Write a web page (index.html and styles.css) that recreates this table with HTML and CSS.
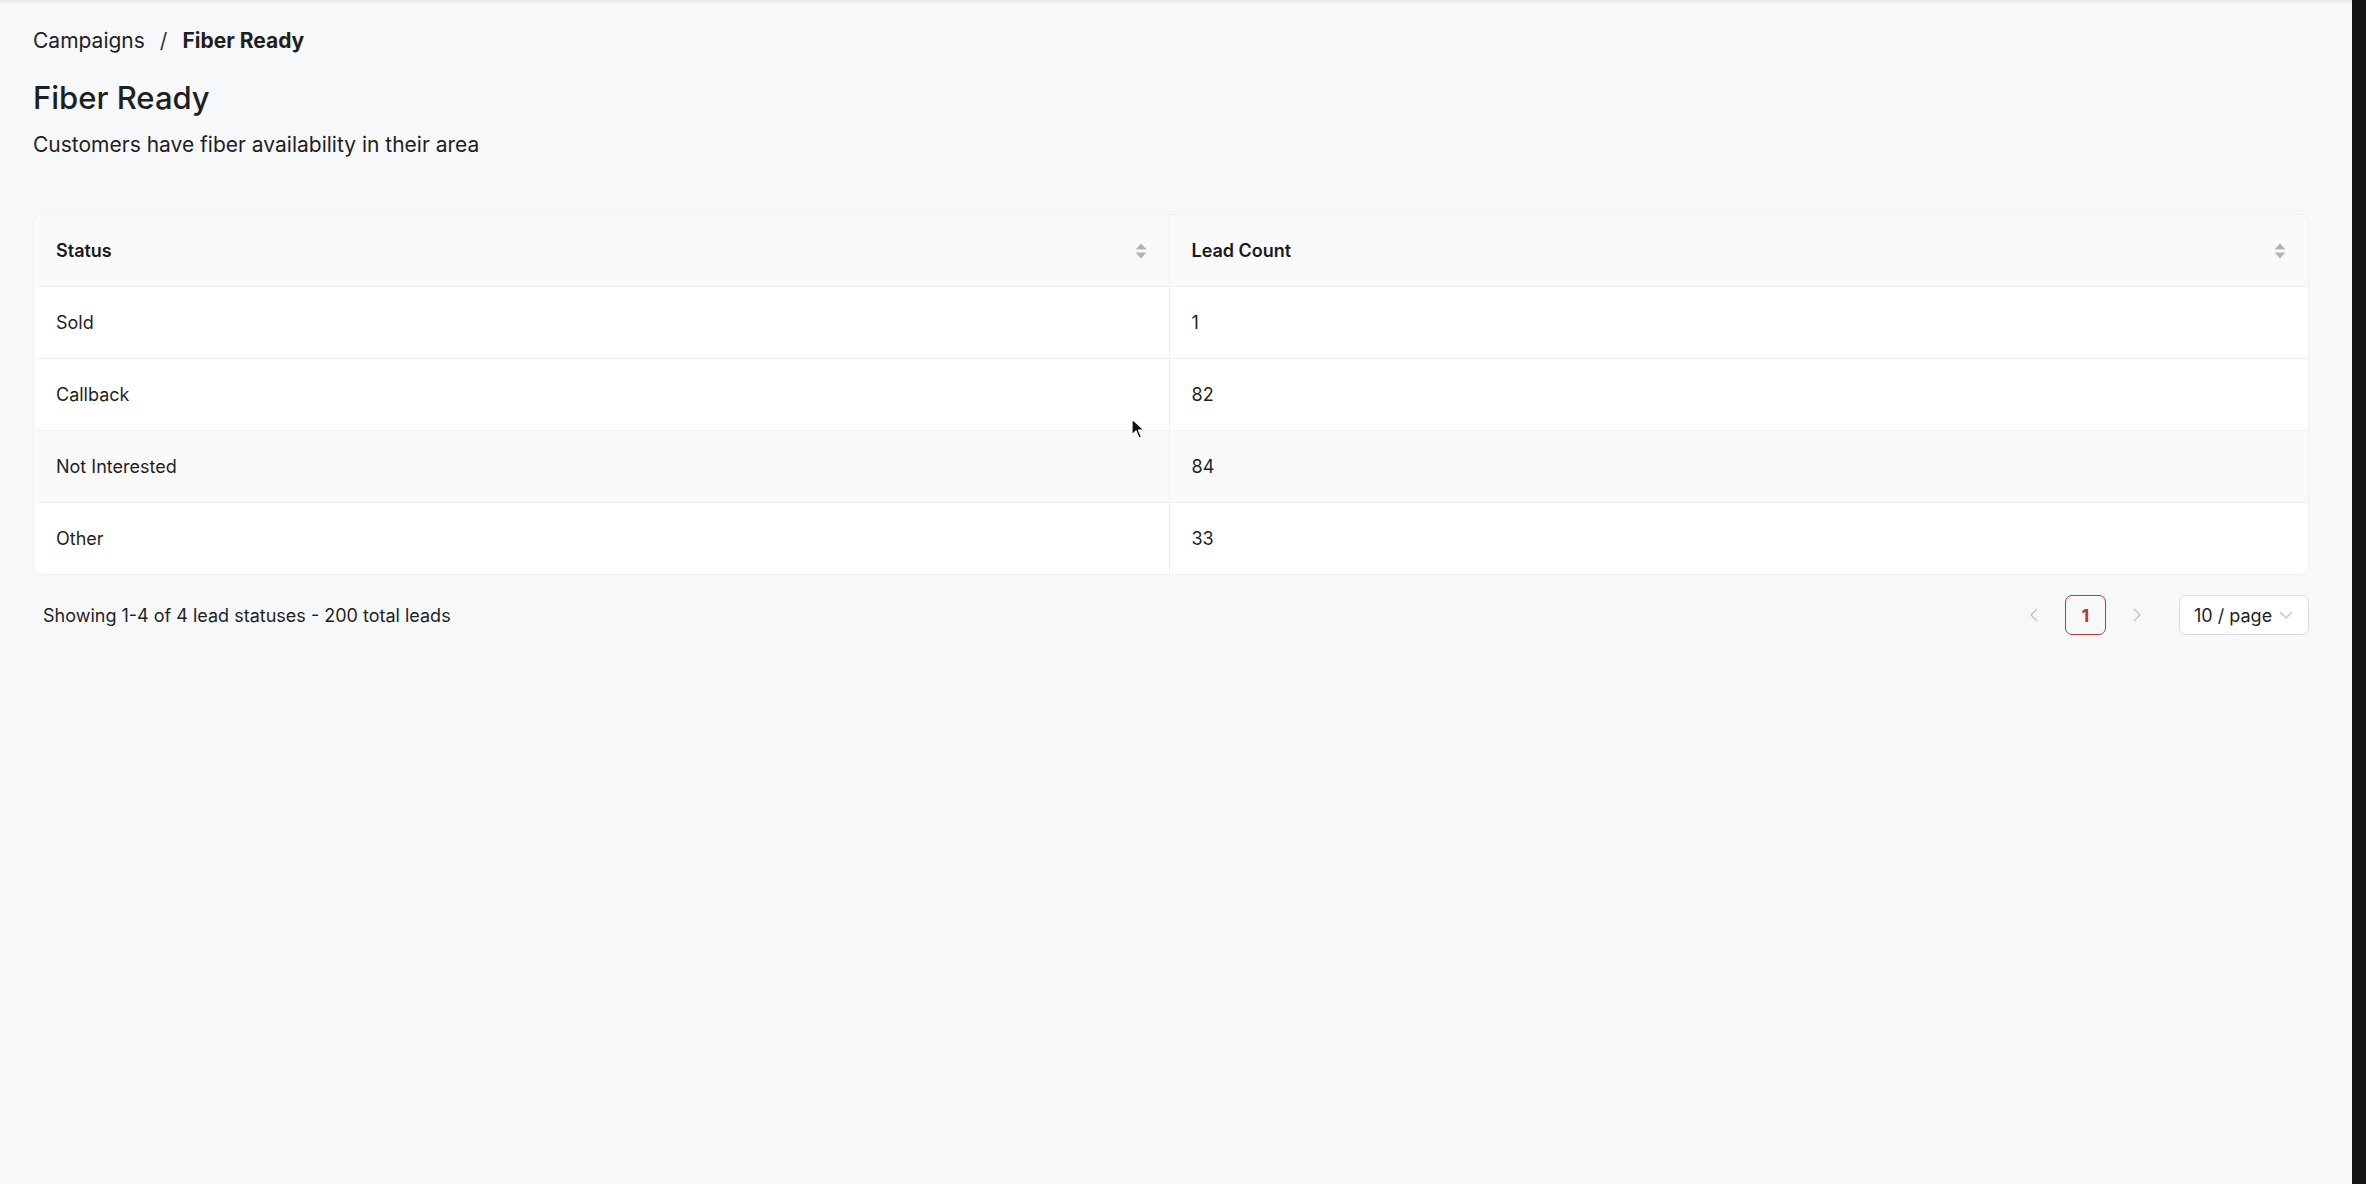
FILE: index.html
```html
<!DOCTYPE html>
<html lang="en">
<head>
    <meta charset="UTF-8">
    <meta name="viewport" content="width=device-width, initial-scale=1.0">
    <title>Fiber Ready</title>
    <link rel="stylesheet" href="styles.css">
</head>
<body>
    <div class="page">
        <!-- Breadcrumb -->
        <nav class="breadcrumb">
            <span class="crumb">Campaigns</span>
            <span class="sep">/</span>
            <span class="crumb current">Fiber Ready</span>
        </nav>

        <!-- Heading -->
        <h1 class="title">Fiber Ready</h1>
        <p class="subtitle">Customers have fiber availability in their area</p>

        <!-- Status table -->
        <div class="table-wrap">
            <table class="lead-table">
                <colgroup>
                    <col class="col-status">
                    <col>
                </colgroup>
                <thead>
                    <tr>
                        <th>
                            <div class="th-inner">
                                <span>Status</span>
                                <svg class="sorter" width="12" height="16" viewBox="0 0 12 16"><path d="M6 0.5 L11.5 6.5 H0.5 Z"/><path d="M0.5 9.5 H11.5 L6 15.5 Z"/></svg>
                            </div>
                        </th>
                        <th>
                            <div class="th-inner">
                                <span>Lead Count</span>
                                <svg class="sorter" width="12" height="16" viewBox="0 0 12 16"><path d="M6 0.5 L11.5 6.5 H0.5 Z"/><path d="M0.5 9.5 H11.5 L6 15.5 Z"/></svg>
                            </div>
                        </th>
                    </tr>
                </thead>
                <tbody>
                    <tr><td>Sold</td><td>1</td></tr>
                    <tr><td>Callback</td><td>82</td></tr>
                    <tr class="hover"><td>Not Interested</td><td>84</td></tr>
                    <tr><td>Other</td><td>33</td></tr>
                </tbody>
            </table>
        </div>

        <!-- Footer / pagination -->
        <div class="table-footer">
            <div class="total">Showing 1-4 of 4 lead statuses - 200 total leads</div>
            <div class="pagination">
                <span class="pg-arrow">
                    <svg width="10" height="14" viewBox="0 0 10 14"><path d="M8 1 L2 7 L8 13" fill="none" stroke="#c4c4c4" stroke-width="1.4"/></svg>
                </span>
                <span class="pg-item active">1</span>
                <span class="pg-arrow">
                    <svg width="10" height="14" viewBox="0 0 10 14"><path d="M2 1 L8 7 L2 13" fill="none" stroke="#c4c4c4" stroke-width="1.4"/></svg>
                </span>
                <div class="page-size">
                    <span>10 / page</span>
                    <svg width="14" height="10" viewBox="0 0 14 10"><path d="M1 2 L7 8 L13 2" fill="none" stroke="#c4c4c4" stroke-width="1.4"/></svg>
                </div>
            </div>
        </div>

        <!-- mouse pointer in the capture -->
        <svg class="cursor" width="14" height="22" viewBox="0 0 14 22"><path d="M1 1 V17 L5 13 L8 20 L10.5 19 L7.5 12 H13 Z" fill="#111" stroke="#fff" stroke-width="1.2" stroke-linejoin="round"/></svg>
    </div>
    <div class="edge"></div>
</body>
</html>
```

FILE: styles.css
```css
/* Base */
body {
    margin: 0;
    display: flex;
    min-height: 100vh;
    font-family: Inter, "Noto Sans", sans-serif;
    color: #1f1f1f;
    background: #161616;
}

.page {
    position: relative;
    flex: 1;
    padding: 26px 43px 0 33px;
    background-color: #f7f8fa;
    background-image: linear-gradient(#e9eaec, #f7f8fa);
    background-size: 100% 5px;
    background-repeat: no-repeat;
}

.edge {
    width: 14px;
    background: #161616;
}

/* Breadcrumb */
.breadcrumb {
    display: flex;
    align-items: center;
    font-size: 21px;
    line-height: 30px;
    color: #1f1f1f;
}
.sep {
    margin: 0 15px 0 15px;
    color: #333;
}
.crumb.current {
    font-weight: 700;
}

/* Heading */
.title {
    margin: 22px 0 0;
    font-size: 31px;
    line-height: 40px;
    font-weight: 500;
    color: #1d1f23;
}
.subtitle {
    margin: 12px 0 0;
    font-size: 21px;
    line-height: 30px;
    color: #1f1f1f;
}

/* Table */
.table-wrap {
    margin-top: 54px;
    border: 1px solid #f0f0f0;
    border-radius: 9px;
    overflow: hidden;
    background: #fff;
}
.lead-table {
    width: 100%;
    border-collapse: collapse;
    table-layout: fixed;
    font-size: 18px;
}
.col-status {
    width: 1135px;
}
.lead-table th {
    height: 71px;
    padding: 0 22px;
    background: #fafafa;
    text-align: left;
    font-weight: 600;
    color: #1a1a1a;
    border-bottom: 1px solid #f0f0f0;
}
.lead-table th + th,
.lead-table td + td {
    border-left: 1px solid #f0f0f0;
}
.th-inner {
    display: flex;
    align-items: center;
    justify-content: space-between;
}
.sorter {
    fill: #b3b3b3;
}
.lead-table td {
    height: 71px;
    padding: 0 22px;
    color: #1f1f1f;
    border-bottom: 1px solid #f0f0f0;
}
.lead-table tr:last-child td {
    border-bottom: none;
}
.lead-table tr.hover td {
    background: #fafafa;
}

/* Footer */
.table-footer {
    display: flex;
    align-items: center;
    justify-content: space-between;
    margin-top: 20px;
}
.total {
    padding-left: 10px;
    font-size: 18px;
    color: #1f1f1f;
}
.pagination {
    display: flex;
    align-items: center;
}
.pg-arrow {
    width: 40px;
    height: 40px;
    display: flex;
    align-items: center;
    justify-content: center;
}
.pg-item {
    width: 39px;
    height: 38px;
    margin: 0 11px;
    display: flex;
    align-items: center;
    justify-content: center;
    border: 1px solid #b83a31;
    border-radius: 7px;
    color: #b83a31;
    font-weight: 700;
    font-size: 18px;
}
.page-size {
    margin-left: 22px;
    width: 128px;
    height: 38px;
    display: flex;
    align-items: center;
    justify-content: space-between;
    border: 1px solid #dcdcdc;
    border-radius: 7px;
    background: #fff;
    font-size: 18px;
}
.page-size span {
    margin-left: 14px;
}
.page-size svg {
    margin-right: 15px;
}

/* Pointer overlay */
.cursor {
    position: absolute;
    left: 1131px;
    top: 418px;
}
```
